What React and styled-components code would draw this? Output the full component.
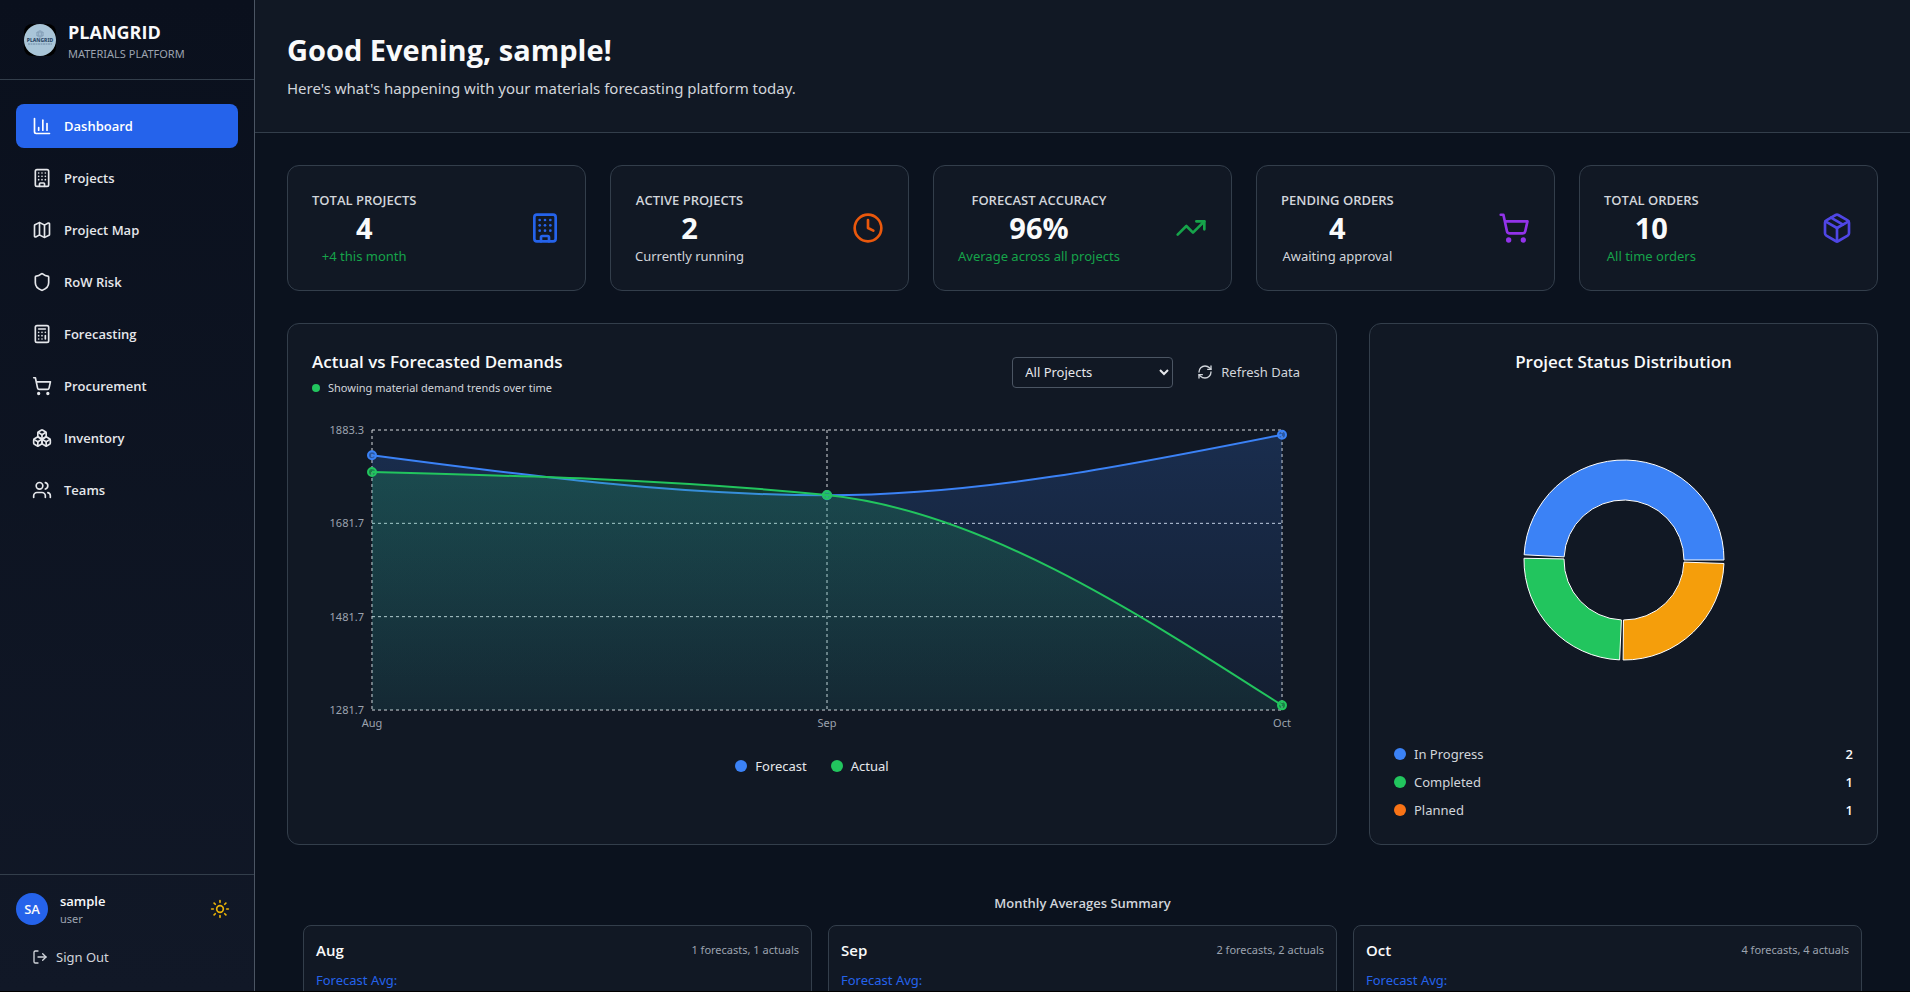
import React from "react";
import styled, { createGlobalStyle, css } from "styled-components";
import {
  ChartColumn,
  Building,
  Map as MapIcon,
  Shield,
  Calculator,
  ShoppingCart,
  Boxes,
  Users,
  Sun,
  LogOut,
  Clock,
  TrendingUp,
  Package,
  RefreshCw,
} from "lucide-react";

const color = {
  page: "#0b121e",
  panel: "#111824",
  line: "#333e4b",
  lineStrong: "#4b5563",
  text: "#f9fafb",
  soft: "#d1d5db",
  muted: "#9ca3af",
  blue: "#2563eb",
  series: { blue: "#3b82f6", green: "#22c55e", amber: "#f59e0b", orange: "#f97316" },
};

const headingFont = css`
  font-family: "Open Sans", "Noto Sans", sans-serif;
`;

const GlobalStyle = createGlobalStyle`
  *, *::before, *::after { box-sizing: border-box; }
  body {
    margin: 0;
    background: ${color.page};
    color: ${color.text};
    font-family: "Noto Sans", "Open Sans", sans-serif;
    font-size: 13px;
    line-height: 20px;
  }
  h1, h2, h3, p, ul, dl, dd { margin: 0; padding: 0; }
  ul { list-style: none; }
  button, select { font: inherit; color: inherit; cursor: pointer; }
  svg { display: block; flex: none; }
`;

const Shell = styled.div`
  display: flex;
  height: 100vh;
  overflow: hidden;
  border-bottom: 1px solid #000;
`;

const Sidebar = styled.aside`
  display: flex;
  flex-direction: column;
  flex: none;
  width: 255px;
  border-right: 1px solid ${color.lineStrong};
  background: linear-gradient(#0a101d, #111827);
`;

const Brand = styled.header`
  display: flex;
  align-items: center;
  gap: 12px;
  height: 80px;
  padding: 0 24px;
  border-bottom: 1px solid ${color.line};
`;

const BrandName = styled.div`
  ${headingFont}
  font-size: 18px;
  line-height: 28px;
  font-weight: 700;
`;

const Caption = styled.div`
  font-size: 11px;
  line-height: 16px;
  color: ${color.muted};
`;

const Nav = styled.nav`
  flex: 1;
  padding: 24px 16px;
`;

const NavList = styled.ul`
  display: grid;
  gap: 8px;
`;

const NavLink = styled.a`
  ${headingFont}
  display: flex;
  align-items: center;
  gap: 12px;
  padding: 12px 16px;
  border-radius: 8px;
  font-weight: 600;
  text-decoration: none;
  color: ${(p) => (p.$active ? "#fff" : "#e5e7eb")};
  background: ${(p) => (p.$active ? color.blue : "transparent")};
`;

const Account = styled.footer`
  display: grid;
  gap: 12px;
  padding: 16px;
  border-top: 1px solid ${color.line};
`;

const AccountRow = styled.div`
  display: flex;
  align-items: center;
  gap: 12px;
`;

const Avatar = styled.span`
  ${headingFont}
  display: grid;
  place-items: center;
  width: 32px;
  height: 32px;
  border-radius: 50%;
  background: ${color.blue};
  font-weight: 600;
`;

const AccountText = styled.div`
  flex: 1;
`;

const AccountName = styled.div`
  ${headingFont}
  font-weight: 600;
`;

const plainButton = css`
  display: flex;
  align-items: center;
  gap: 8px;
  border: 0;
  border-radius: 8px;
  background: transparent;
`;

const IconButton = styled.button`
  ${plainButton}
  padding: 8px;
  color: #eab308;
`;

const TextButton = styled.button`
  ${plainButton}
  padding: 8px ${(p) => p.$inset}px;
  color: ${color.soft};
`;

const Main = styled.main`
  flex: 1;
  min-width: 0;
  overflow: hidden;
`;

const PageHeader = styled.header`
  padding: 32px;
  border-bottom: 1px solid ${color.line};
  background: ${color.panel};
`;

const Greeting = styled.h1`
  ${headingFont}
  margin-bottom: 8px;
  font-size: 29px;
  line-height: 36px;
  font-weight: 700;
`;

const Intro = styled.p`
  font-size: 15px;
  line-height: 24px;
  color: ${color.soft};
`;

const Content = styled.div`
  display: grid;
  gap: 32px;
  padding: 32px;
`;

const Card = styled.section`
  padding: 24px;
  border: 1px solid ${color.line};
  border-radius: 12px;
  background: ${color.panel};
`;

const StatGrid = styled.div`
  display: grid;
  grid-template-columns: repeat(5, minmax(0, 1fr));
  gap: 24px;
`;

const StatCard = styled(Card)`
  display: flex;
  align-items: center;
  justify-content: space-between;
`;

const StatText = styled.div`
  text-align: center;
`;

const StatLabel = styled.h2`
  ${headingFont}
  font-size: 13px;
  line-height: 20px;
  font-weight: 600;
  color: ${color.soft};
`;

const StatValue = styled.p`
  ${headingFont}
  font-size: 29px;
  line-height: 36px;
  font-weight: 700;
`;

const StatNote = styled.p`
  color: ${(p) => (p.$positive ? "#16a34a" : color.soft)};
`;

const ChartGrid = styled.div`
  display: grid;
  grid-template-columns: repeat(3, minmax(0, 1fr));
  gap: 32px;
`;

const DemandCard = styled(Card)`
  grid-column: span 2;
`;

const CardHeader = styled.div`
  display: flex;
  align-items: center;
  justify-content: space-between;
  margin-bottom: 24px;
`;

const CardTitle = styled.h2`
  ${headingFont}
  font-size: 17px;
  line-height: 28px;
  font-weight: 600;
  text-align: ${(p) => (p.$centered ? "center" : "left")};
`;

const CardNote = styled.p`
  display: flex;
  align-items: center;
  gap: 8px;
  margin-top: 4px;
  font-size: 11px;
  line-height: 16px;
  color: ${color.soft};
`;

const Dot = styled.span`
  flex: none;
  width: ${(p) => p.$size}px;
  height: ${(p) => p.$size}px;
  border-radius: 50%;
  background: ${(p) => p.$color};
`;

const Controls = styled.div`
  display: flex;
  align-items: center;
  gap: 12px;
`;

const ProjectSelect = styled.select`
  width: 161px;
  height: 31px;
  padding: 0 8px;
  border: 1px solid ${color.lineStrong};
  border-radius: 4px;
  background: ${color.panel};
  color: #e5e7eb;
`;

const Chart = styled.svg`
  width: 100%;
  height: auto;
  overflow: visible;
`;

const AxisText = styled.text`
  font-size: 11px;
  fill: ${color.muted};
`;

const SeriesLegend = styled.ul`
  display: flex;
  justify-content: center;
  gap: 24px;
  margin-top: 16px;
  color: #e5e7eb;
`;

const LegendItem = styled.li`
  display: flex;
  align-items: center;
  gap: 8px;
`;

const PieArea = styled.div`
  display: grid;
  place-items: center;
  height: 320px;
  margin: 24px 0;
`;

const StatusList = styled.dl`
  display: grid;
  gap: 8px;
  margin: 0;
`;

const StatusRow = styled.div`
  display: flex;
  justify-content: space-between;
`;

const StatusName = styled.dt`
  display: flex;
  align-items: center;
  gap: 8px;
  color: ${color.soft};
`;

const StatusCount = styled.dd`
  ${headingFont}
  font-weight: 600;
`;

const Summary = styled.section`
  padding: 16px;
`;

const SummaryTitle = styled.h2`
  ${headingFont}
  margin-bottom: 12px;
  font-size: 13px;
  line-height: 20px;
  font-weight: 600;
  text-align: center;
  color: ${color.soft};
`;

const SummaryGrid = styled.div`
  display: grid;
  grid-template-columns: repeat(3, minmax(0, 1fr));
  gap: 16px;
`;

const MonthCard = styled.article`
  min-height: 128px;
  padding: 12px;
  border: 1px solid ${color.line};
  border-radius: 8px;
  background: ${color.panel};
`;

const MonthHeader = styled.div`
  display: flex;
  align-items: center;
  justify-content: space-between;
  margin-bottom: 8px;
`;

const MonthName = styled.h3`
  ${headingFont}
  font-size: 15px;
  line-height: 24px;
  font-weight: 600;
`;

const ForecastLabel = styled.p`
  color: ${color.blue};
`;

const navItems = [
  ["Dashboard", ChartColumn],
  ["Projects", Building],
  ["Project Map", MapIcon],
  ["RoW Risk", Shield],
  ["Forecasting", Calculator],
  ["Procurement", ShoppingCart],
  ["Inventory", Boxes],
  ["Teams", Users],
];

const stats = [
  { label: "TOTAL PROJECTS", value: "4", note: "+4 this month", positive: true, icon: Building, tint: "#2563eb" },
  { label: "ACTIVE PROJECTS", value: "2", note: "Currently running", icon: Clock, tint: "#ea580c" },
  { label: "FORECAST ACCURACY", value: "96%", note: "Average across all projects", positive: true, icon: TrendingUp, tint: "#16a34a" },
  { label: "PENDING ORDERS", value: "4", note: "Awaiting approval", icon: ShoppingCart, tint: "#9333ea" },
  { label: "TOTAL ORDERS", value: "10", note: "All time orders", positive: true, icon: Package, tint: "#4f46e5" },
];

const statuses = [
  { name: "In Progress", count: 2, fill: color.series.blue, dot: color.series.blue },
  { name: "Completed", count: 1, fill: color.series.green, dot: color.series.green },
  { name: "Planned", count: 1, fill: color.series.amber, dot: color.series.orange },
];

const months = [
  { name: "Aug", forecast: 1828.9, actual: 1793, records: 1 },
  { name: "Sep", forecast: 1743, actual: 1743.5, records: 2 },
  { name: "Oct", forecast: 1873.2, actual: 1291.7, records: 4 },
];

const plot = { left: 60, right: 970, top: 10, bottom: 290 };
const ticks = [1883.3, 1681.7, 1481.7, 1281.7];
const xAt = (i) => plot.left + ((plot.right - plot.left) * i) / (months.length - 1);
const yAt = (v) => plot.bottom - ((v - 1281.7) / (1883.3 - 1281.7)) * (plot.bottom - plot.top);

// Monotone cubic through equally spaced points.
function monotonePath(points) {
  const h = points[1][0] - points[0][0];
  const s = points.slice(1).map((p, i) => (p[1] - points[i][1]) / h);
  const n = points.length;
  const t = points.map((_, i) => {
    if (i === 0 || i === n - 1) return 0;
    const a = s[i - 1];
    const b = s[i];
    return (Math.sign(a) + Math.sign(b)) * Math.min(Math.abs(a), Math.abs(b), Math.abs(a + b) / 4);
  });
  t[0] = (3 * s[0] - t[1]) / 2;
  t[n - 1] = (3 * s[n - 2] - t[n - 2]) / 2;
  return points.slice(1).reduce((d, [x, y], i) => {
    const [px, py] = points[i];
    return `${d}C${px + h / 3},${py + (t[i] * h) / 3},${x - h / 3},${y - (t[i + 1] * h) / 3},${x},${y}`;
  }, `M${points[0].join(",")}`);
}

function Series({ field, stroke, fillId }) {
  const points = months.map((m, i) => [xAt(i), yAt(m[field])]);
  const line = monotonePath(points);
  return (
    <g>
      <path d={`${line}V${plot.bottom}H${plot.left}Z`} fill={`url(#${fillId})`} />
      <path d={line} fill="none" stroke={stroke} strokeWidth="2" />
      {points.map(([x, y]) => (
        <circle key={x} cx={x} cy={y} r="4" fill={stroke} fillOpacity="0.6" stroke={stroke} strokeWidth="2" />
      ))}
    </g>
  );
}

function DemandChart() {
  return (
    <Chart viewBox="0 0 1000 320" role="img" aria-label="Actual vs forecasted demands by month">
      <defs>
        {[
          ["forecastFill", color.series.blue],
          ["actualFill", color.series.green],
        ].map(([id, tint]) => (
          <linearGradient key={id} id={id} x1="0" y1="0" x2="0" y2="1">
            <stop offset="0" stopColor={tint} stopOpacity="0.2" />
            <stop offset="1" stopColor={tint} stopOpacity="0.06" />
          </linearGradient>
        ))}
      </defs>
      <g stroke="#d8dade" strokeDasharray="3 3">
        {[0, 1, 2, 3].map((i) => {
          const y = plot.top + ((plot.bottom - plot.top) * i) / 3;
          return <line key={i} x1={plot.left} x2={plot.right} y1={y} y2={y} />;
        })}
        {months.map((m, i) => (
          <line key={m.name} x1={xAt(i)} x2={xAt(i)} y1={plot.top} y2={plot.bottom} />
        ))}
      </g>
      {ticks.map((v, i) => (
        <AxisText key={v} x="52" y={plot.top + ((plot.bottom - plot.top) * i) / 3 + 4} textAnchor="end">
          {v}
        </AxisText>
      ))}
      {months.map((m, i) => (
        <AxisText key={m.name} x={xAt(i)} y="307" textAnchor="middle">
          {m.name}
        </AxisText>
      ))}
      <Series field="forecast" stroke={color.series.blue} fillId="forecastFill" />
      <Series field="actual" stroke={color.series.green} fillId="actualFill" />
    </Chart>
  );
}

function StatusPie() {
  const pad = 2;
  const total = statuses.reduce((sum, s) => sum + s.count, 0);
  const available = 360 - pad * statuses.length;
  const at = (r, deg) => {
    const a = (deg * Math.PI) / 180;
    return `${102 + r * Math.cos(a)},${102 - r * Math.sin(a)}`;
  };
  let start = 0;
  return (
    <svg width="204" height="204" viewBox="0 0 204 204" role="img" aria-label="Project status distribution">
      {statuses.map((s) => {
        const from = start;
        const to = from + (available * s.count) / total;
        start = to + pad;
        return (
          <path
            key={s.name}
            d={`M${at(100, from)}A100,100,0,0,0,${at(100, to)}L${at(60, to)}A60,60,0,0,1,${at(60, from)}Z`}
            fill={s.fill}
            stroke="#fff"
          />
        );
      })}
    </svg>
  );
}

function Logo() {
  return (
    <svg width="32" height="32" viewBox="0 0 32 32" aria-hidden="true">
      <rect width="32" height="32" rx="8" fill="#000" />
      <circle cx="16" cy="16" r="16" fill="#a9c5d8" />
      <g fill="none" stroke="#7f9bb3" strokeWidth="0.7">
        <circle cx="16" cy="10" r="3.2" />
        <ellipse cx="16" cy="10" rx="1.5" ry="3.2" />
        <path d="M12 8.8h8M12 11.2h8" />
      </g>
      <text x="16" y="18.3" textAnchor="middle" fontSize="5" fontWeight="800" fill="#2b4766">
        PLANGRID
      </text>
      <path d="M4 20h24" stroke="#6f8ca6" strokeWidth="1" strokeDasharray="2 0.5" />
    </svg>
  );
}

export default function App() {
  return (
    <>
      <GlobalStyle />
      <Shell>
        <Sidebar>
          <Brand>
            <Logo />
            <div>
              <BrandName>PLANGRID</BrandName>
              <Caption>MATERIALS PLATFORM</Caption>
            </div>
          </Brand>
          <Nav aria-label="Main">
            <NavList>
              {navItems.map(([label, Icon], i) => (
                <li key={label}>
                  <NavLink href="#" $active={i === 0} aria-current={i === 0 ? "page" : undefined}>
                    <Icon size={20} />
                    {label}
                  </NavLink>
                </li>
              ))}
            </NavList>
          </Nav>
          <Account>
            <AccountRow>
              <Avatar>SA</Avatar>
              <AccountText>
                <AccountName>sample</AccountName>
                <Caption>user</Caption>
              </AccountText>
              <IconButton type="button" aria-label="Switch to light theme">
                <Sun size={20} />
              </IconButton>
            </AccountRow>
            <TextButton type="button" $inset={16}>
              <LogOut size={16} />
              Sign Out
            </TextButton>
          </Account>
        </Sidebar>
        <Main>
          <PageHeader>
            <Greeting>Good Evening, sample!</Greeting>
            <Intro>Here's what's happening with your materials forecasting platform today.</Intro>
          </PageHeader>
          <Content>
            <StatGrid>
              {stats.map(({ label, value, note, positive, icon: Icon, tint }) => (
                <StatCard key={label}>
                  <StatText>
                    <StatLabel>{label}</StatLabel>
                    <StatValue>{value}</StatValue>
                    <StatNote $positive={positive}>{note}</StatNote>
                  </StatText>
                  <Icon size={32} color={tint} />
                </StatCard>
              ))}
            </StatGrid>
            <ChartGrid>
              <DemandCard>
                <CardHeader>
                  <div>
                    <CardTitle>Actual vs Forecasted Demands</CardTitle>
                    <CardNote>
                      <Dot $size={8} $color={color.series.green} />
                      Showing material demand trends over time
                    </CardNote>
                  </div>
                  <Controls>
                    <ProjectSelect aria-label="Project" defaultValue="all">
                      <option value="all">All Projects</option>
                    </ProjectSelect>
                    <TextButton type="button" $inset={12}>
                      <RefreshCw size={16} />
                      Refresh Data
                    </TextButton>
                  </Controls>
                </CardHeader>
                <DemandChart />
                <SeriesLegend>
                  <LegendItem>
                    <Dot $size={12} $color={color.series.blue} />
                    Forecast
                  </LegendItem>
                  <LegendItem>
                    <Dot $size={12} $color={color.series.green} />
                    Actual
                  </LegendItem>
                </SeriesLegend>
              </DemandCard>
              <Card>
                <CardTitle $centered>Project Status Distribution</CardTitle>
                <PieArea>
                  <StatusPie />
                </PieArea>
                <StatusList>
                  {statuses.map((s) => (
                    <StatusRow key={s.name}>
                      <StatusName>
                        <Dot $size={12} $color={s.dot} />
                        {s.name}
                      </StatusName>
                      <StatusCount>{s.count}</StatusCount>
                    </StatusRow>
                  ))}
                </StatusList>
              </Card>
            </ChartGrid>
            <Summary>
              <SummaryTitle>Monthly Averages Summary</SummaryTitle>
              <SummaryGrid>
                {months.map((m) => (
                  <MonthCard key={m.name}>
                    <MonthHeader>
                      <MonthName>{m.name}</MonthName>
                      <Caption>
                        {m.records} forecasts, {m.records} actuals
                      </Caption>
                    </MonthHeader>
                    <ForecastLabel>Forecast Avg:</ForecastLabel>
                  </MonthCard>
                ))}
              </SummaryGrid>
            </Summary>
          </Content>
        </Main>
      </Shell>
    </>
  );
}
